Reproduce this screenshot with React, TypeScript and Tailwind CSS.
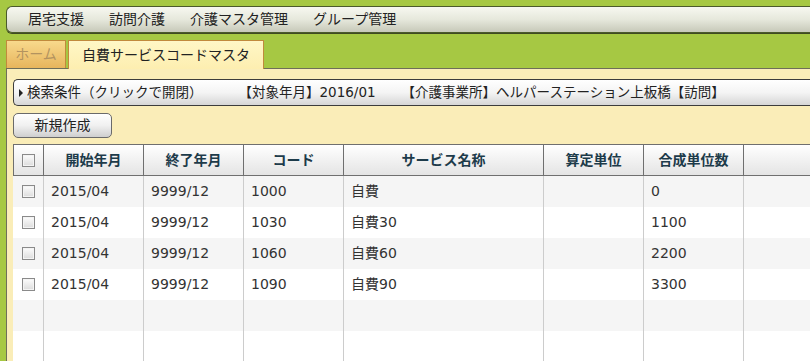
import React from "react";

const cols = [
  { key: "start", label: "開始年月", w: "w-[100px]" },
  { key: "end", label: "終了年月", w: "w-[100px]" },
  { key: "code", label: "コード", w: "w-[100px]" },
  { key: "name", label: "サービス名称", w: "w-[200px]" },
  { key: "unit", label: "算定単位", w: "w-[100px]" },
  { key: "total", label: "合成単位数", w: "w-[100px]" },
];

const rows = [
  { start: "2015/04", end: "9999/12", code: "1000", name: "自費", unit: "", total: "0" },
  { start: "2015/04", end: "9999/12", code: "1030", name: "自費30", unit: "", total: "1100" },
  { start: "2015/04", end: "9999/12", code: "1060", name: "自費60", unit: "", total: "2200" },
  { start: "2015/04", end: "9999/12", code: "1090", name: "自費90", unit: "", total: "3300" },
  null,
  null,
];

const Check = () => (
  <span className="block w-[13px] h-[13px] border border-[#8a8a8a] bg-gradient-to-b from-[#fdfdfd] to-[#dcdcdc] shadow-[inset_0_0_0_1px_#f4f4f4]" />
);

const App = () => {
  return (
    <div className="w-[810px] h-[361px] overflow-hidden bg-[#a6c843] pt-[6px] pl-[6px] font-['DejaVu_Sans','Noto_Sans_CJK_JP',sans-serif] text-[14px] text-[#222]">
      {/* main menu */}
      <div className="h-[27px] flex items-center gap-[25px] pl-[21px] rounded-l-[6px] border border-r-0 border-[#4b5a2c] bg-gradient-to-b from-[#f7f8f0] via-[#e6e8dc] to-[#c7c9b9] shadow-[0_1px_0_#3f4a22]">
        <span>居宅支援</span>
        <span>訪問介護</span>
        <span>介護マスタ管理</span>
        <span>グループ管理</span>
      </div>

      {/* tabs */}
      <div className="flex items-end gap-[2px] mt-[7px] h-[28px]">
        <div className="w-[60px] h-[28px] flex items-center justify-center border border-b-0 border-[#c18a3c] bg-gradient-to-b from-[#f8d98c] to-[#e7b55c] text-[#b3935f]">
          ホーム
        </div>
        <div className="relative z-10 w-[196px] h-[29px] -mb-px flex items-center justify-center border border-b-0 border-[#c18a3c] bg-gradient-to-b from-[#fff7c6] to-[#fdeeb0]">
          自費サービスコードマスタ
        </div>
      </div>

      {/* content panel */}
      <div className="border-t border-l border-[#6e6e5a] bg-[#faedb8] pl-[6px] pt-[10px] h-[300px]">
        <div className="h-[27px] flex items-center pl-[5px] text-[13.5px] rounded-l-[5px] border border-r-0 border-[#3c3c3c] bg-gradient-to-b from-[#ffffff] via-[#f4f4f4] to-[#d6d6d6]">
          <span className="w-0 h-0 border-y-[4px] border-y-transparent border-l-[4px] border-l-[#222] mr-[4px]" />
          <span>検索条件（クリックで開閉）</span>
          <span className="ml-[36px]">【対象年月】2016/01</span>
          <span className="ml-[26px]">【介護事業所】ヘルパーステーション上板橋【訪問】</span>
        </div>

        <button className="mt-[7px] w-[99px] h-[25px] flex items-center justify-center rounded-[5px] border border-[#6a6a6a] bg-gradient-to-b from-[#ffffff] via-[#f0f0f0] to-[#cfcfcf] text-[14px]">
          新規作成
        </button>

        {/* table */}
        <div className="mt-[6px] bg-white">
          <div className="flex h-[32px] border-t border-b border-l border-[#6f6f6f] bg-gradient-to-b from-[#ffffff] to-[#e4e4e4] font-bold text-[#1d3b4a]">
            <div className="w-[30px] flex items-center justify-center border-r border-[#6f6f6f]">
              <Check />
            </div>
            {cols.map((c) => (
              <div
                key={c.key}
                className={`${c.w} flex items-center justify-center border-r border-[#6f6f6f]`}
              >
                {c.label}
              </div>
            ))}
            <div className="flex-1" />
          </div>
          {rows.map((r, i) => (
            <div
              key={i}
              className={`flex h-[31px] ${i % 2 === 0 ? "bg-[#f5f5f5]" : "bg-white"}`}
            >
              <div className="w-[31px] flex items-center justify-center border-r border-[#cccccc]">
                {r && <Check />}
              </div>
              {cols.map((c) => (
                <div
                  key={c.key}
                  className={`${c.w} flex items-center pl-[7px] border-r border-[#cccccc] text-[#333]`}
                >
                  {r ? (r as Record<string, string>)[c.key] : ""}
                </div>
              ))}
              <div className="flex-1" />
            </div>
          ))}
        </div>
      </div>
    </div>
  );
};

export default App;
